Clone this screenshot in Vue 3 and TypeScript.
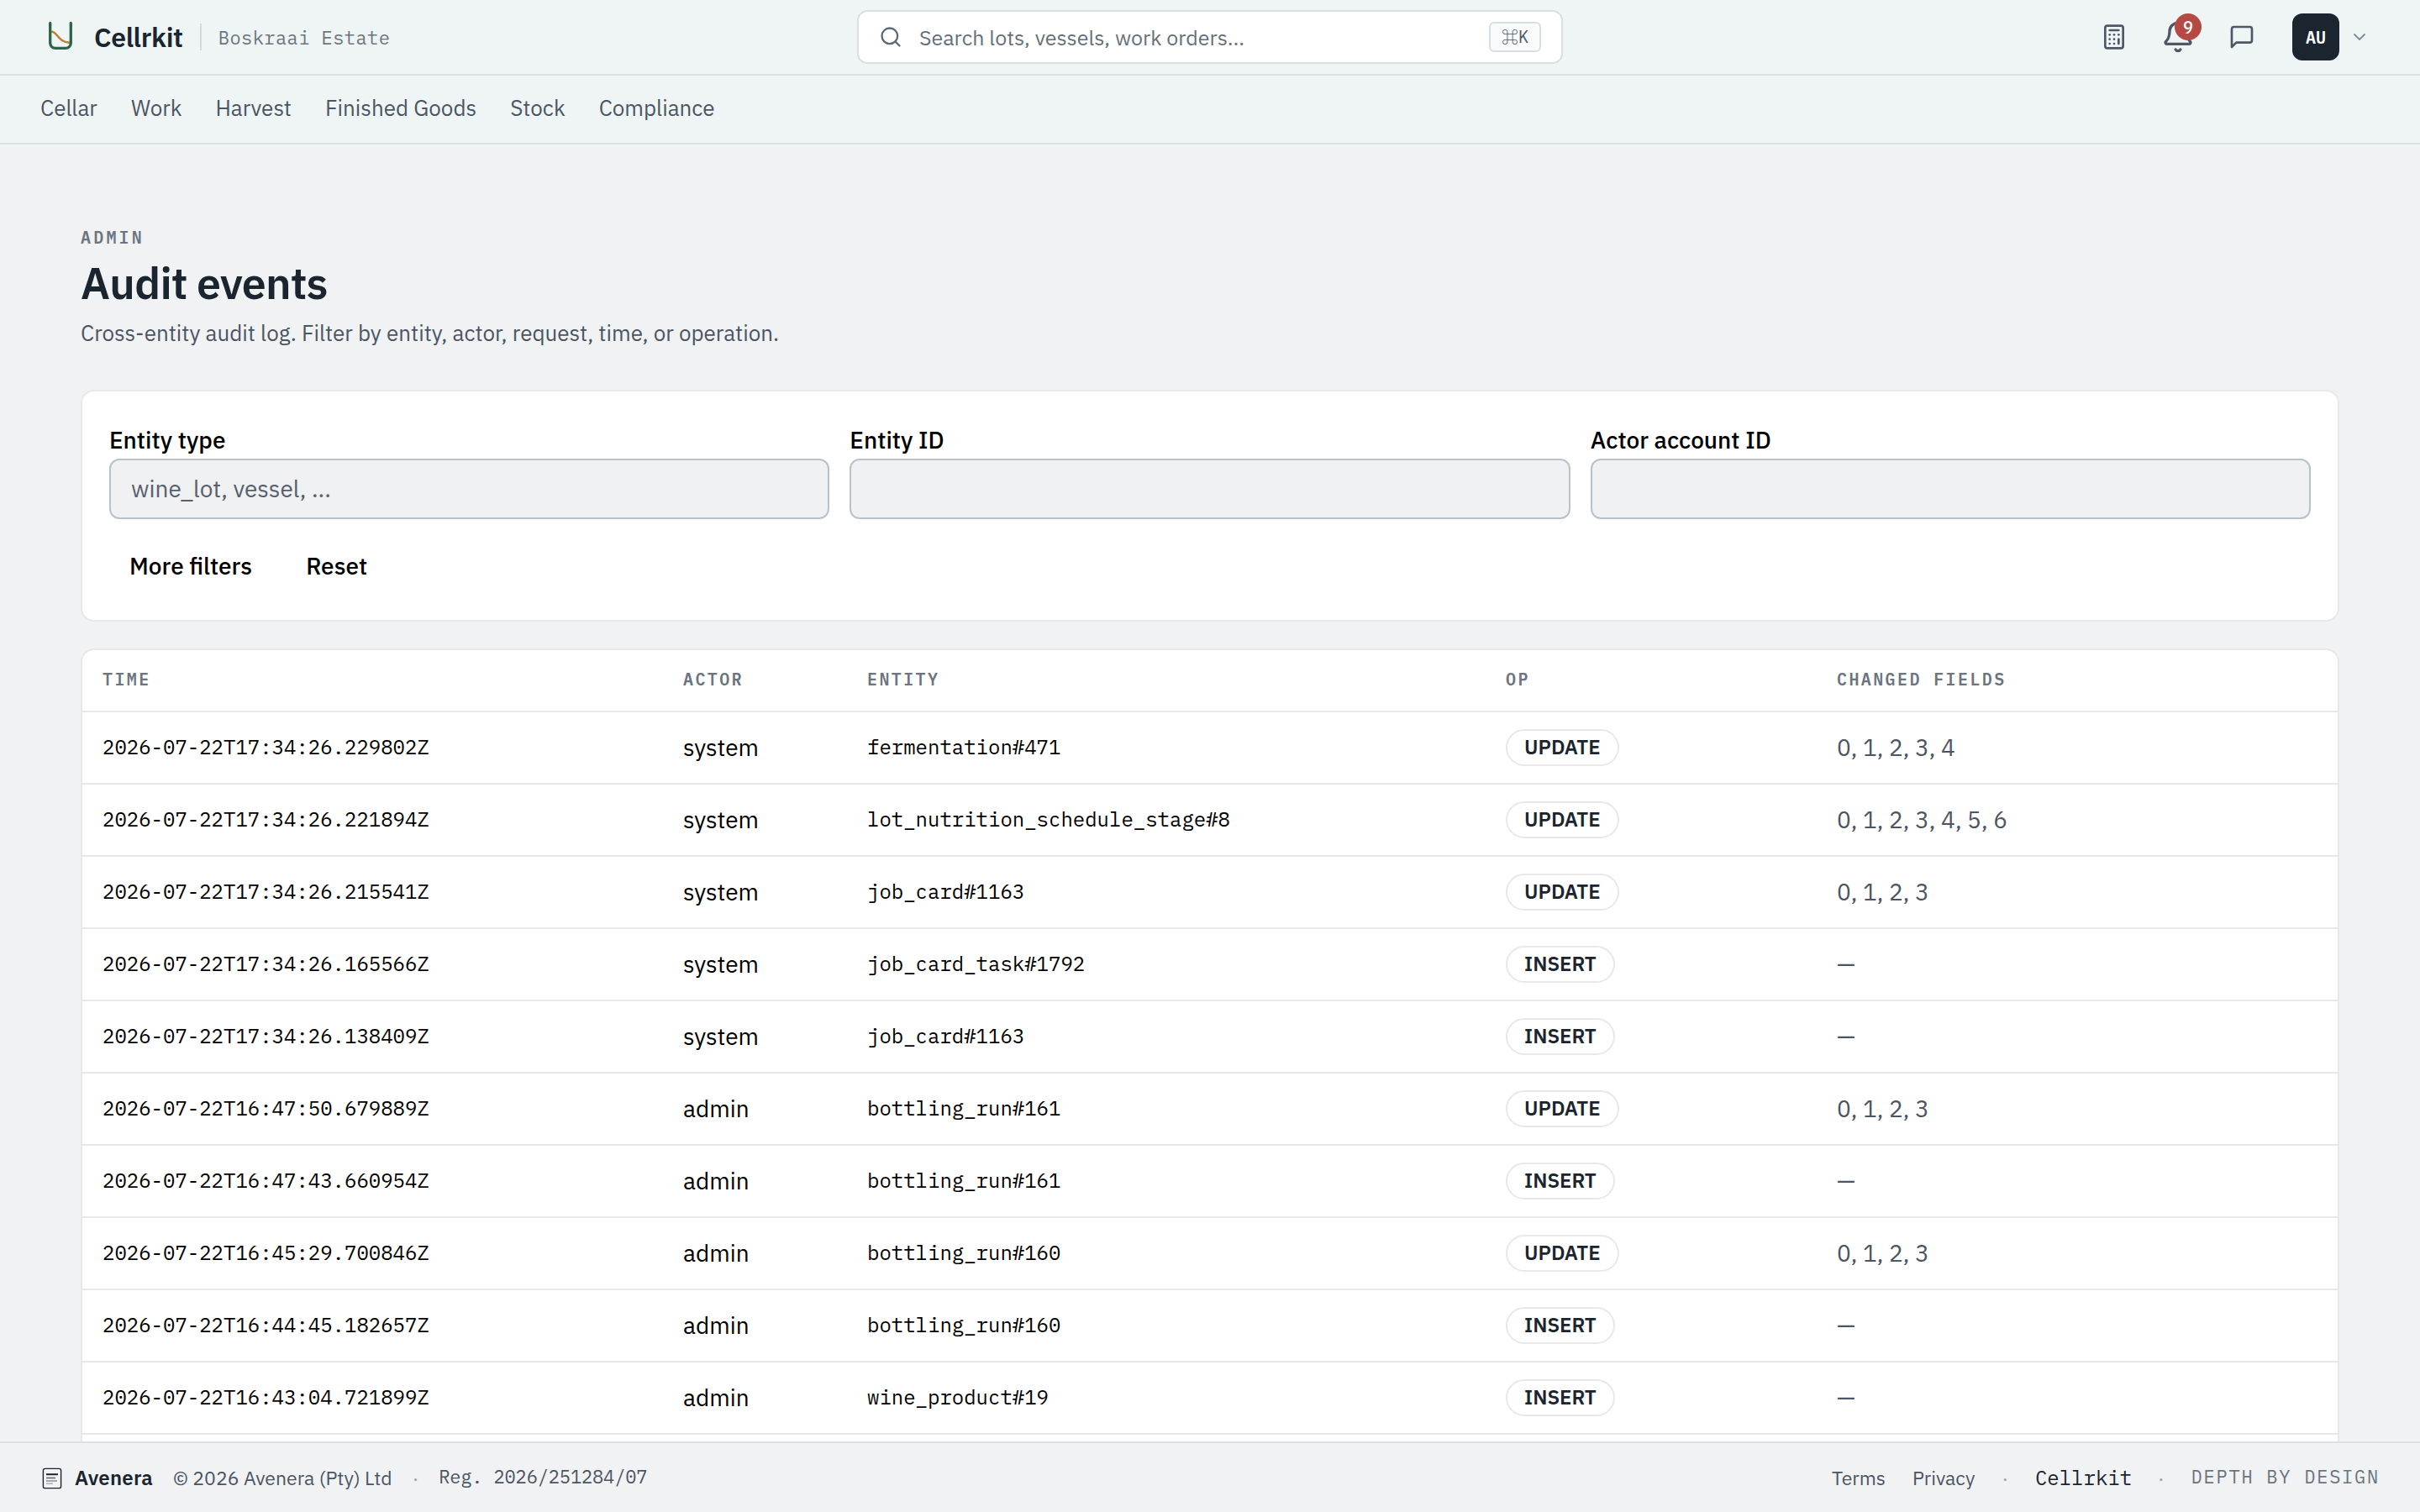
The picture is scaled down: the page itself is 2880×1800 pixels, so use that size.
<script setup lang="ts">
interface AuditEvent {
  time: string
  actor: string
  entity: string
  op: 'UPDATE' | 'INSERT'
  changed: string
}

const navItems: string[] = ['Cellar', 'Work', 'Harvest', 'Finished Goods', 'Stock', 'Compliance']

const columns: string[] = ['Time', 'Actor', 'Entity', 'Op', 'Changed fields']

const events: AuditEvent[] = [
  { time: '2026-07-22T17:34:26.229802Z', actor: 'system', entity: 'fermentation#471', op: 'UPDATE', changed: '0, 1, 2, 3, 4' },
  { time: '2026-07-22T17:34:26.221894Z', actor: 'system', entity: 'lot_nutrition_schedule_stage#8', op: 'UPDATE', changed: '0, 1, 2, 3, 4, 5, 6' },
  { time: '2026-07-22T17:34:26.215541Z', actor: 'system', entity: 'job_card#1163', op: 'UPDATE', changed: '0, 1, 2, 3' },
  { time: '2026-07-22T17:34:26.165566Z', actor: 'system', entity: 'job_card_task#1792', op: 'INSERT', changed: '—' },
  { time: '2026-07-22T17:34:26.138409Z', actor: 'system', entity: 'job_card#1163', op: 'INSERT', changed: '—' },
  { time: '2026-07-22T16:47:50.679889Z', actor: 'admin', entity: 'bottling_run#161', op: 'UPDATE', changed: '0, 1, 2, 3' },
  { time: '2026-07-22T16:47:43.660954Z', actor: 'admin', entity: 'bottling_run#161', op: 'INSERT', changed: '—' },
  { time: '2026-07-22T16:45:29.700846Z', actor: 'admin', entity: 'bottling_run#160', op: 'UPDATE', changed: '0, 1, 2, 3' },
  { time: '2026-07-22T16:44:45.182657Z', actor: 'admin', entity: 'bottling_run#160', op: 'INSERT', changed: '—' },
  { time: '2026-07-22T16:43:04.721899Z', actor: 'admin', entity: 'wine_product#19', op: 'INSERT', changed: '—' },
]
</script>

<template>
  <div class="app">
    <header class="topbar">
      <div class="brand">
        <svg class="logo" width="48" height="48" viewBox="0 0 48 48" fill="none" stroke-linecap="round">
          <path d="M13.6 17.8C19.6 17.4 21.4 30.4 34.6 30.7" stroke="#c07f35" stroke-width="2.5" />
          <path d="M11.7 7.4V31.3a6 6 0 0 0 6 6H30.3a6 6 0 0 0 6-6V7.4" stroke="#2f6349" stroke-width="3.3" />
        </svg>
        <span class="brand-name">Cellrkit</span>
        <span class="brand-divider"></span>
        <span class="estate">Boskraai Estate</span>
      </div>

      <div class="search">
        <svg class="search-icon" width="28" height="28" viewBox="0 0 24 24" fill="none" stroke="currentColor" stroke-width="2" stroke-linecap="round" stroke-linejoin="round">
          <circle cx="11" cy="11" r="8" />
          <path d="m21 21-4.3-4.3" />
        </svg>
        <span class="search-text">Search lots, vessels, work orders...</span>
        <kbd class="kbd"><span class="cmd">⌘</span>K</kbd>
      </div>

      <div class="actions">
        <button class="icon-btn" type="button" aria-label="Calculator">
          <svg width="32" height="32" viewBox="0 0 24 24" fill="none" stroke="currentColor" stroke-width="2" stroke-linecap="round" stroke-linejoin="round">
            <rect width="16" height="20" x="4" y="2" rx="2" />
            <line x1="8" x2="16" y1="6" y2="6" />
            <line x1="16" x2="16" y1="14" y2="18" />
            <path d="M16 10h.01" />
            <path d="M12 10h.01" />
            <path d="M8 10h.01" />
            <path d="M12 14h.01" />
            <path d="M8 14h.01" />
            <path d="M12 18h.01" />
            <path d="M8 18h.01" />
          </svg>
        </button>
        <button class="icon-btn" type="button" aria-label="Notifications">
          <svg width="40" height="40" viewBox="0 0 24 24" fill="none" stroke="currentColor" stroke-width="2" stroke-linecap="round" stroke-linejoin="round">
            <path d="M10.268 21a2 2 0 0 0 3.464 0" />
            <path d="M3.262 15.326A1 1 0 0 0 4 17h16a1 1 0 0 0 .74-1.673C19.41 13.956 18 12.499 18 8A6 6 0 0 0 6 8c0 4.499-1.411 5.956-2.738 7.326" />
          </svg>
          <span class="badge">9</span>
        </button>
        <button class="icon-btn" type="button" aria-label="Messages">
          <svg width="32" height="32" viewBox="0 0 24 24" fill="none" stroke="currentColor" stroke-width="2" stroke-linecap="round" stroke-linejoin="round">
            <path d="M21 15a2 2 0 0 1-2 2H7l-4 4V5a2 2 0 0 1 2-2h14a2 2 0 0 1 2 2z" />
          </svg>
        </button>
        <div class="account">
          <span class="avatar">AU</span>
          <svg class="chevron" width="24" height="24" viewBox="0 0 24 24" fill="none" stroke="currentColor" stroke-width="2" stroke-linecap="round" stroke-linejoin="round">
            <path d="m6 9 6 6 6-6" />
          </svg>
        </div>
      </div>
    </header>

    <nav class="nav">
      <a v-for="item in navItems" :key="item" class="nav-link">{{ item }}</a>
    </nav>

    <main class="content">
      <p class="eyebrow">ADMIN</p>
      <h1 class="title">Audit events</h1>
      <p class="subtitle">Cross-entity audit log. Filter by entity, actor, request, time, or operation.</p>

      <section class="card filters">
        <div class="fields">
          <label class="field">
            <span class="label">Entity type</span>
            <input class="input" type="text" placeholder="wine_lot, vessel, ..." />
          </label>
          <label class="field">
            <span class="label">Entity ID</span>
            <input class="input" type="text" />
          </label>
          <label class="field">
            <span class="label">Actor account ID</span>
            <input class="input" type="text" />
          </label>
        </div>
        <div class="filter-actions">
          <button class="ghost-btn" type="button">More filters</button>
          <button class="ghost-btn" type="button">Reset</button>
        </div>
      </section>

      <section class="card table-card">
        <table class="table">
          <colgroup>
            <col class="col-time" />
            <col class="col-actor" />
            <col class="col-entity" />
            <col class="col-op" />
            <col />
          </colgroup>
          <thead>
            <tr>
              <th v-for="column in columns" :key="column">{{ column }}</th>
            </tr>
          </thead>
          <tbody>
            <tr v-for="event in events" :key="event.time">
              <td class="mono">{{ event.time }}</td>
              <td>{{ event.actor }}</td>
              <td class="mono">{{ event.entity }}</td>
              <td class="op"><span class="pill">{{ event.op }}</span></td>
              <td class="changed">{{ event.changed }}</td>
            </tr>
          </tbody>
        </table>
      </section>
    </main>

    <footer class="footer">
      <div class="footer-group">
        <svg class="footer-logo" width="28" height="28" viewBox="0 0 28 28" fill="none">
          <rect x="3.4" y="3.4" width="21.2" height="23.2" rx="2.2" stroke="#1a2530" stroke-width="1.4" />
          <path d="M7 10.2H21" stroke="#1a2530" stroke-width="2" />
          <path d="M7 14.5H18" stroke="#1a2530" stroke-opacity="0.65" stroke-width="1.6" />
          <path d="M7 18H20" stroke="#1a2530" stroke-opacity="0.45" stroke-width="1.6" />
          <path d="M7 21.2H15" stroke="#1a2530" stroke-opacity="0.3" stroke-width="1.6" />
        </svg>
        <span class="company">Avenera</span>
        <span class="copyright">© 2026 Avenera (Pty) Ltd</span>
        <span class="dot">·</span>
        <span class="reg">Reg. 2026/251284/07</span>
      </div>
      <div class="footer-group footer-right">
        <a class="footer-link terms">Terms</a>
        <a class="footer-link">Privacy</a>
        <span class="dot">·</span>
        <span class="product">Cellrkit</span>
        <span class="dot">·</span>
        <span class="tagline">DEPTH BY DESIGN</span>
      </div>
    </footer>
  </div>
</template>

<style>
html,
body {
  margin: 0;
  background: #f0f2f4;
}
</style>

<style scoped>
* {
  box-sizing: border-box;
}

.app {
  --sans: 'IBM Plex Sans', 'Noto Sans', sans-serif;
  --mono: 'IBM Plex Mono', 'Liberation Mono', monospace;
  --ink: #1a2530;
  --text-2: #4b5563;
  --text-3: #6b7580;
  --line: #dbe0e2;
  --card-line: #e6e8e9;
  display: flex;
  flex-direction: column;
  width: 2880px;
  height: 1800px;
  overflow: hidden;
  background: #f0f2f4;
  color: #000;
  font-family: var(--sans);
  font-size: 28px;
}

/* Top bar */
.topbar {
  display: grid;
  grid-template-columns: 1fr 840px 1fr;
  align-items: center;
  flex: none;
  height: 90px;
  padding: 0 48px;
  background: #eff5f5;
  border-bottom: 2px solid var(--line);
}

.brand {
  display: flex;
  align-items: center;
}

.logo {
  display: block;
  margin-right: 16px;
}

.brand-name {
  font-size: 32px;
  line-height: 42px;
  font-weight: 600;
  letter-spacing: -0.01em;
  color: var(--ink);
}

.brand-divider {
  width: 2px;
  height: 32px;
  margin: 0 20px;
  background: #d3d9dc;
}

.estate {
  font-family: var(--mono);
  font-size: 22px;
  letter-spacing: 0.02em;
  color: var(--text-3);
}

.search {
  display: flex;
  align-items: center;
  height: 64px;
  padding: 0 24px;
  background: #fff;
  border: 2px solid var(--line);
  border-radius: 12px;
}

.search-icon {
  flex: none;
  color: #5d6977;
}

.search-text {
  flex: 1;
  margin-left: 20px;
  font-size: 25px;
  color: #66707b;
}

.kbd {
  display: flex;
  align-items: center;
  justify-content: center;
  width: 62px;
  height: 36px;
  background: #f8fafb;
  border: 2px solid #d9dee1;
  border-radius: 6px;
  font-family: var(--mono);
  font-size: 20px;
  line-height: 32px;
  color: #505a67;
}

.cmd {
  font-family: 'Noto Sans CJK JP', 'DejaVu Sans', sans-serif;
}

.actions {
  display: flex;
  align-items: center;
  justify-content: flex-end;
  gap: 4px;
}

.icon-btn {
  position: relative;
  display: flex;
  align-items: center;
  justify-content: center;
  width: 72px;
  height: 72px;
  padding: 0;
  border: 0;
  background: none;
  color: #4f5766;
}

.badge {
  position: absolute;
  top: 8px;
  right: 8px;
  width: 32px;
  height: 32px;
  border-radius: 50%;
  background: #b54a44;
  color: #fff;
  font-family: var(--mono);
  font-size: 20px;
  font-weight: 500;
  line-height: 33px;
  text-align: center;
}

.account {
  display: flex;
  align-items: center;
  gap: 12px;
  margin-left: 20px;
  padding-right: 12px;
}

.avatar {
  width: 56px;
  height: 56px;
  border-radius: 12px;
  background: var(--ink);
  color: #fff;
  font-family: var(--mono);
  font-size: 20px;
  font-weight: 600;
  line-height: 57px;
  text-align: center;
}

.chevron {
  color: #858e98;
}

/* Section navigation */
.nav {
  display: flex;
  align-items: center;
  flex: none;
  gap: 40px;
  height: 82px;
  padding: 0 48px 4px;
  background: #eff5f5;
  border-bottom: 2px solid var(--line);
}

.nav-link {
  font-size: 26px;
  line-height: 34px;
  color: var(--text-2);
}

/* Page */
.content {
  flex: 1;
  min-height: 0;
  overflow: hidden;
  padding: 97px 96px 0;
}

.eyebrow {
  margin: 0;
  font-family: var(--mono);
  font-size: 20px;
  font-weight: 600;
  line-height: 28px;
  letter-spacing: 0.16em;
  color: var(--text-3);
}

.title {
  margin: 10px 0 0;
  font-size: 52px;
  font-weight: 600;
  line-height: 60px;
  letter-spacing: -0.015em;
  color: var(--ink);
}

.subtitle {
  margin: 11px 0 0;
  font-size: 26px;
  line-height: 36px;
  color: var(--text-2);
}

.card {
  background: #fff;
  border: 2px solid var(--card-line);
  border-radius: 16px;
}

.filters {
  height: 276px;
  margin-top: 50px;
  padding: 40px 32px 0;
}

.fields {
  display: grid;
  grid-template-columns: repeat(3, 1fr);
  gap: 24px;
}

.field {
  display: flex;
  flex-direction: column;
}

.label {
  height: 40px;
  font-weight: 500;
  line-height: 36px;
}

.input {
  width: 100%;
  height: 72px;
  padding: 0 24px 1px;
  background: #eff1f3;
  border: 2px solid #b8c2cb;
  border-radius: 12px;
  font-family: var(--sans);
  font-size: 28px;
}

.input::placeholder {
  color: #57606c;
  opacity: 1;
}

.filter-actions {
  display: flex;
  gap: 16px;
  margin-top: 19px;
}

.ghost-btn {
  height: 72px;
  padding: 0 24px;
  border: 0;
  background: none;
  color: #000;
  font-family: var(--sans);
  font-size: 28px;
  font-weight: 500;
}

/* Audit table; the card runs on below the fold */
.table-card {
  min-height: 1030px;
  margin-top: 32px;
  overflow: hidden;
}

.table {
  width: 100%;
  table-layout: fixed;
  border-collapse: separate;
  border-spacing: 0;
}

.col-time {
  width: 691px;
}

.col-actor {
  width: 219px;
}

.col-entity {
  width: 760px;
}

.col-op {
  width: 394px;
}

th {
  height: 74px;
  padding: 0 24px 3px;
  border-bottom: 2px solid var(--card-line);
  font-family: var(--mono);
  font-size: 20px;
  font-weight: 600;
  letter-spacing: 0.12em;
  text-align: left;
  text-transform: uppercase;
  color: var(--text-3);
}

td {
  height: 86px;
  padding: 0 24px 1px;
  border-bottom: 2px solid var(--card-line);
  vertical-align: middle;
}

.mono {
  padding-bottom: 2px;
  font-family: var(--mono);
  font-size: 24px;
}

.op {
  padding-bottom: 0;
}

.pill {
  display: flex;
  align-items: center;
  width: fit-content;
  height: 44px;
  padding: 0 20px 2px;
  border: 2px solid var(--card-line);
  border-radius: 22px;
  color: var(--ink);
  font-size: 24px;
  font-weight: 600;
}

.changed {
  color: var(--text-2);
}

/* Footer */
.footer {
  display: flex;
  align-items: center;
  justify-content: space-between;
  flex: none;
  height: 84px;
  padding: 0 48px;
  background: #f0f2f4;
  border-top: 2px solid var(--line);
  color: var(--text-2);
  font-size: 23px;
}

.footer-group {
  display: flex;
  align-items: center;
}

.footer-logo {
  margin-right: 13px;
}

.company {
  margin-right: 24px;
  font-size: 24px;
  font-weight: 600;
  letter-spacing: 0.01em;
  color: var(--ink);
}

.dot {
  color: #98a1aa;
}

.copyright + .dot {
  margin: 0 24px;
}

.reg {
  padding-bottom: 3px;
  font-family: var(--mono);
  font-size: 22px;
  letter-spacing: -0.14px;
}

.footer-right {
  gap: 32px;
}

.product {
  margin-right: -1px;
  font-family: var(--mono);
  font-size: 24px;
  color: var(--ink);
}

.tagline {
  padding-bottom: 3px;
  font-family: var(--mono);
  font-size: 22px;
  letter-spacing: 0.08em;
  color: var(--text-3);
}
</style>
